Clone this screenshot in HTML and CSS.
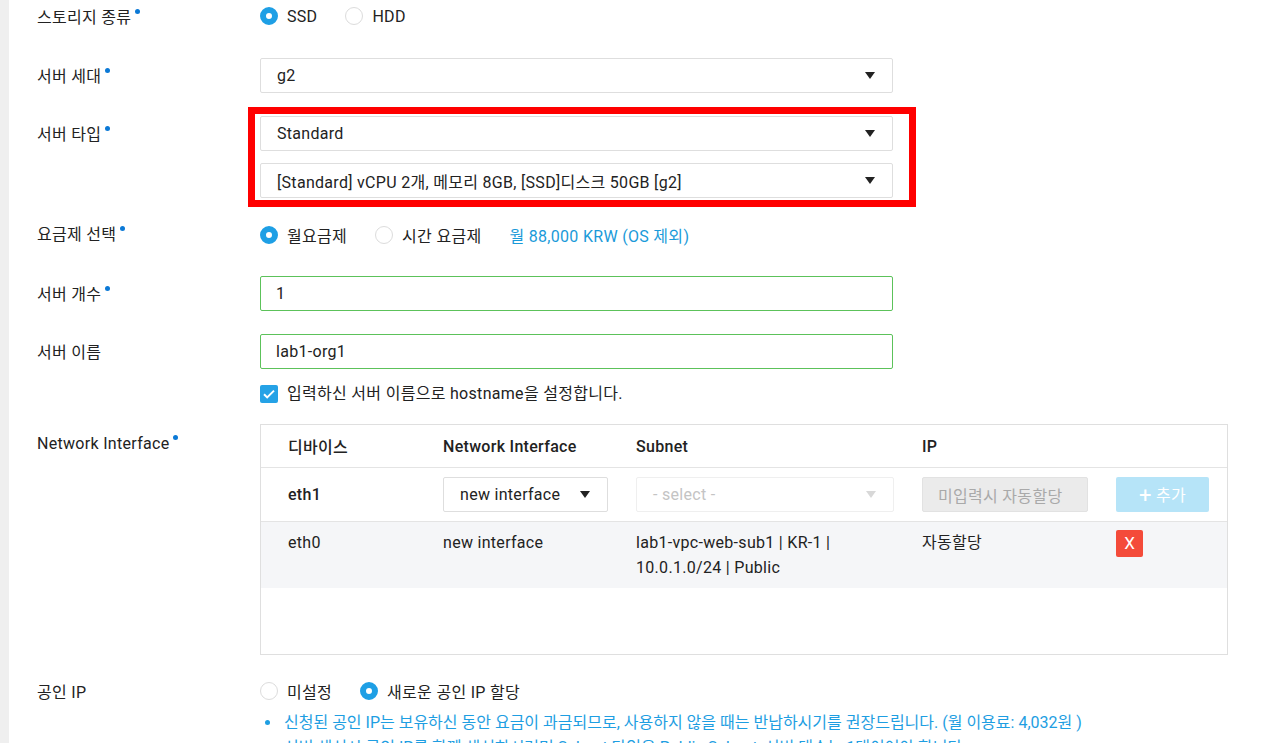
FILE: index.html
```html
<!DOCTYPE html>
<html lang="ko">
<head>
    <meta charset="UTF-8">
    <meta name="viewport" content="width=device-width, initial-scale=1.0">
    <title>서버 생성</title>
    <link rel="stylesheet" href="styles.css">
</head>
<body>
    <div class="page">
        <div class="form">
            <div class="row row-storage">
                <div class="label required">스토리지 종류</div>
                <div class="field radios">
                    <label class="radio checked"><span class="circle"></span>SSD</label>
                    <label class="radio"><span class="circle"></span>HDD</label>
                </div>
            </div>

            <div class="row row-gen">
                <div class="label required">서버 세대</div>
                <div class="field">
                    <div class="select"><span>g2</span><i class="caret"></i></div>
                </div>
            </div>

            <div class="row row-type">
                <div class="label required">서버 타입</div>
                <div class="field">
                    <div class="mark">
                        <div class="select"><span>Standard</span><i class="caret"></i></div>
                        <div class="select"><span>[Standard] vCPU 2개, 메모리 8GB, [SSD]디스크 50GB [g2]</span><i class="caret"></i></div>
                    </div>
                </div>
            </div>

            <div class="row row-price">
                <div class="label required">요금제 선택</div>
                <div class="field radios">
                    <label class="radio checked"><span class="circle"></span>월요금제</label>
                    <label class="radio"><span class="circle"></span>시간 요금제</label>
                    <span class="price">월 88,000 KRW (OS 제외)</span>
                </div>
            </div>

            <div class="row row-count">
                <div class="label required">서버 개수</div>
                <div class="field">
                    <div class="input valid">1</div>
                </div>
            </div>

            <div class="row row-name">
                <div class="label">서버 이름</div>
                <div class="field">
                    <div class="input valid">lab1-org1</div>
                    <label class="check">
                        <span class="box">
                            <svg width="14" height="14" viewBox="0 0 14 14"><path d="M2 7.2l3.2 3.2L12 3.6" fill="none" stroke="#fff" stroke-width="2"/></svg>
                        </span>
                        입력하신 서버 이름으로 hostname을 설정합니다.
                    </label>
                </div>
            </div>

            <div class="row row-nic">
                <div class="label required">Network Interface</div>
                <div class="field">
                    <div class="nic-table">
                        <div class="nic-row nic-head">
                            <div>디바이스</div>
                            <div>Network Interface</div>
                            <div>Subnet</div>
                            <div>IP</div>
                            <div></div>
                        </div>
                        <div class="nic-row nic-new">
                            <div class="dev">eth1</div>
                            <div><div class="select small"><span>new interface</span><i class="caret"></i></div></div>
                            <div><div class="select disabled"><span>- select -</span><i class="caret"></i></div></div>
                            <div><div class="input disabled">미입력시 자동할당</div></div>
                            <div><button class="btn-add"><b>+</b> 추가</button></div>
                        </div>
                        <div class="nic-row nic-item">
                            <div>eth0</div>
                            <div>new interface</div>
                            <div>lab1-vpc-web-sub1 | KR-1 |<br>10.0.1.0/24 | Public</div>
                            <div>자동할당</div>
                            <div><button class="btn-del">X</button></div>
                        </div>
                    </div>
                </div>
            </div>

            <div class="row row-ip">
                <div class="label">공인 IP</div>
                <div class="field">
                    <div class="radios">
                        <label class="radio"><span class="circle"></span>미설정</label>
                        <label class="radio checked"><span class="circle"></span>새로운 공인 IP 할당</label>
                    </div>
                    <ul class="notes">
                        <li>신청된 공인 IP는 보유하신 동안 요금이 과금되므로, 사용하지 않을 때는 반납하시기를 권장드립니다. (월 이용료: 4,032원 )</li>
                        <li>서버 생성시 공인 IP를 함께 생성하시려면 Subnet 타입은 Public Subnet, 서버 대수는 1대이어야 합니다.</li>
                    </ul>
                </div>
            </div>
        </div>
    </div>
</body>
</html>
```

FILE: styles.css
```css
html, body {
    margin: 0;
    background: #fff;
}
body {
    font-family: Roboto, "Noto Sans CJK KR", sans-serif;
    font-size: 16px;
    letter-spacing: 0.3px;
    color: #222;
    overflow: hidden;
}
.page {
    border-left: 9px solid #efefef;
    min-height: 743px;
}
.form {
    padding-left: 28px;
}
.row {
    display: flex;
    align-items: flex-start;
}
.label {
    width: 223px;
    flex: none;
    line-height: 34px;
    position: relative;
    top: 2px;
}
.row-price .label {
    top: 0;
}
.required::after {
    content: "";
    display: inline-block;
    width: 5px;
    height: 5px;
    border-radius: 50%;
    background: #0b79d6;
    margin-left: 4px;
    position: relative;
    top: -9px;
}
.field {
    flex: 1;
}

/* vertical rhythm of the rows */
.row-storage { margin-top: -1px; }
.row-gen { margin-top: 25px; }
.row-type { margin-top: 23px; }
.row-price { margin-top: 20px; }
.row-count { margin-top: 24px; }
.row-name { margin-top: 23px; }
.row-nic { margin-top: 21px; }
.row-ip { margin-top: 19px; }
.row-nic .label { line-height: 40px; top: 0; }

/* radios */
.radios {
    display: flex;
    align-items: center;
    height: 34px;
}
.radio {
    display: flex;
    align-items: center;
    margin-right: 28px;
}
.circle {
    width: 18px;
    height: 18px;
    box-sizing: border-box;
    border: 1px solid #dcdcdc;
    border-radius: 50%;
    background: #fff;
    margin-right: 9px;
}
.radio.checked .circle {
    border: 6px solid #1e9fe5;
}
.price {
    color: #1a9ad9;
}

/* selects & inputs */
.select, .input {
    width: 633px;
    height: 35px;
    box-sizing: border-box;
    border: 1px solid #dedede;
    border-radius: 2px;
    display: flex;
    align-items: center;
    padding: 0 16px;
    background: #fff;
}
.select span {
    flex: 1;
}
.caret {
    width: 0;
    height: 0;
    border-left: 5px solid transparent;
    border-right: 5px solid transparent;
    border-top: 7px solid #222;
    margin-right: 1px;
}
.mark {
    position: relative;
    width: 633px;
}
.mark .select + .select {
    margin-top: 12px;
}
.mark::after {
    content: "";
    position: absolute;
    left: -12px;
    right: -23px;
    top: -9px;
    bottom: -9px;
    border: 7px solid #f00;
}
.input {
    padding: 0 15px;
}
.input.valid {
    border-color: #5cc25a;
}
.row-name .input + .check {
    margin-top: 16px;
}
.check {
    display: flex;
    align-items: center;
    height: 18px;
    line-height: 18px;
}
.box {
    width: 18px;
    height: 18px;
    border-radius: 2px;
    background: #25a2e6;
    display: flex;
    align-items: center;
    justify-content: center;
    margin-right: 9px;
}

/* network interface table */
.nic-table {
    width: 968px;
    height: 231px;
    box-sizing: border-box;
    border: 1px solid #dfdfdf;
}
.nic-row {
    display: grid;
    grid-template-columns: 155px 193px 286px 194px 1fr;
    padding-left: 27px;
}
.nic-head {
    height: 42px;
    align-items: center;
    font-weight: 500;
    border-bottom: 1px solid #e4e4e4;
}
.nic-new {
    height: 53px;
    align-items: center;
    border-bottom: 1px solid #e4e4e4;
}
.nic-new .dev {
    font-weight: 500;
}
.select.small {
    width: 165px;
}
.select.disabled {
    width: 258px;
    border-color: #efefef;
    color: #c4c4c4;
}
.select.disabled .caret {
    border-top-color: #d8d8d8;
}
.input.disabled {
    width: 166px;
    background: #ebebeb;
    border-color: #e2e2e2;
    color: #a9a9a9;
}
.btn-add {
    width: 93px;
    height: 35px;
    border: none;
    border-radius: 2px;
    background: #b6e4f8;
    color: #fff;
    font: inherit;
    letter-spacing: inherit;
}
.btn-add b {
    font-size: 22px;
    font-weight: 400;
    vertical-align: -2px;
}
.nic-item {
    background: #f5f6f8;
    line-height: 25px;
    padding-top: 8px;
    padding-bottom: 8px;
}
.btn-del {
    width: 27px;
    height: 27px;
    border: none;
    border-radius: 2px;
    background: #f44b3a;
    color: #fff;
    font: inherit;
    font-size: 17px;
    padding: 0;
}

/* notes under public ip */
.notes {
    list-style: none;
    margin: 2px 0 0;
    padding: 0;
    color: #1e9ee2;
    letter-spacing: 0;
}
.notes li {
    position: relative;
    padding-left: 24px;
    line-height: 25px;
}
.notes li::before {
    content: "";
    position: absolute;
    left: 5px;
    top: 10px;
    width: 5px;
    height: 5px;
    border-radius: 50%;
    background: #1e9ee2;
}
```
